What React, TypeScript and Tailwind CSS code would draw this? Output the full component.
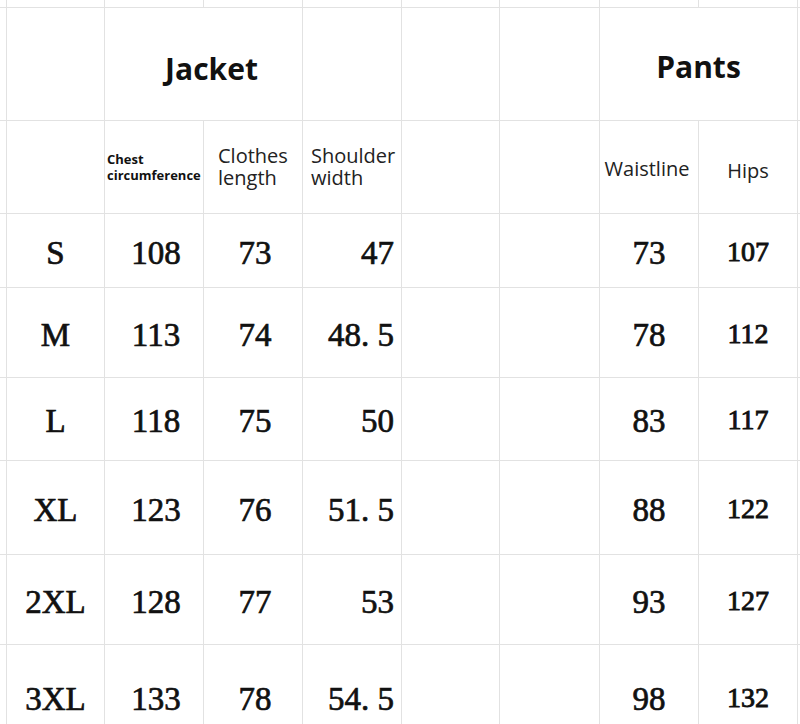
const sizes = [
  { size: "S", chest: "108", length: "73", shoulder: "47", waist: "73", hips: "107" },
  { size: "M", chest: "113", length: "74", shoulder: "48. 5", waist: "78", hips: "112" },
  { size: "L", chest: "118", length: "75", shoulder: "50", waist: "83", hips: "117" },
  { size: "XL", chest: "123", length: "76", shoulder: "51. 5", waist: "88", hips: "122" },
  { size: "2XL", chest: "128", length: "77", shoulder: "53", waist: "93", hips: "127" },
  { size: "3XL", chest: "133", length: "78", shoulder: "54. 5", waist: "98", hips: "132" },
];

const sans = "font-['Open_Sans',sans-serif]";
const serif = "font-['Liberation_Serif',serif] [-webkit-text-stroke:0.7px_#111]";

function Cell({ className = "", children }: { className?: string; children?: React.ReactNode }) {
  return <div className={`bg-white flex items-center ${className}`}>{children}</div>;
}

export default function App() {
  return (
    <div className="w-[800px] h-[724px] overflow-hidden bg-white">
      <div className="grid gap-px bg-[#e2e2e2] text-[#111] grid-cols-[6px_97px_98px_98px_98px_97px_99px_98px_98px_2px] grid-rows-[7px_112px_92px_73px_89px_82px_93px_89px_100px]">
        {/* top strip */}
        {Array.from({ length: 10 }).map((_, i) => (
          <Cell key={`t${i}`} />
        ))}

        {/* group header row */}
        <Cell />
        <Cell />
        <Cell className={`col-span-2 justify-center pt-2 pl-4 ${sans} font-bold text-[30px]`}>Jacket</Cell>
        <Cell />
        <Cell />
        <Cell />
        <Cell className={`col-span-2 justify-center pt-1 ${sans} font-bold text-[30px]`}>Pants</Cell>
        <Cell />

        {/* column labels */}
        <Cell />
        <Cell />
        <Cell className={`pl-[2px] ${sans} font-bold text-[13px] leading-[16px]`}>
          <div>
            Chest
            <br />
            circumference
          </div>
        </Cell>
        <Cell className={`pl-[14px] ${sans} text-[20px] leading-[22px] text-[#222]`}>
          <div>
            Clothes
            <br />
            length
          </div>
        </Cell>
        <Cell className={`pl-[8px] ${sans} text-[20px] leading-[22px] text-[#222]`}>
          <div>
            Shoulder
            <br />
            width
          </div>
        </Cell>
        <Cell />
        <Cell />
        <Cell className={`justify-center pt-1 pr-1 ${sans} text-[20px] text-[#222]`}>Waistline</Cell>
        <Cell className={`justify-center pt-2 ${sans} text-[20px] text-[#222]`}>Hips</Cell>
        <Cell />

        {/* data rows */}
        {sizes.map((r, i) => (
          <div key={r.size} className="contents">
            <Cell />
            <Cell className={`justify-center ${i === 5 ? "pt-[10px]" : "pt-[6px]"} ${serif} text-[33px]`}>{r.size}</Cell>
            <Cell className={`justify-center ${i === 5 ? "pt-[10px]" : "pt-[6px]"} pl-1 ${serif} text-[33px]`}>{r.chest}</Cell>
            <Cell className={`justify-center ${i === 5 ? "pt-[10px]" : "pt-[6px]"} pl-1 ${serif} text-[33px]`}>{r.length}</Cell>
            <Cell className={`justify-end ${i === 5 ? "pt-[10px]" : "pt-[6px]"} pr-[7px] ${serif} text-[33px]`}>{r.shoulder}</Cell>
            <Cell />
            <Cell />
            <Cell className={`justify-center ${i === 5 ? "pt-[10px]" : "pt-[6px]"} ${serif} text-[33px]`}>{r.waist}</Cell>
            <Cell className={`justify-center ${i === 5 ? "pt-[6px]" : "pt-[2px]"} ${serif} [-webkit-text-stroke:0.9px_#111] text-[28px]`}>{r.hips}</Cell>
            <Cell />
          </div>
        ))}
      </div>
    </div>
  );
}
